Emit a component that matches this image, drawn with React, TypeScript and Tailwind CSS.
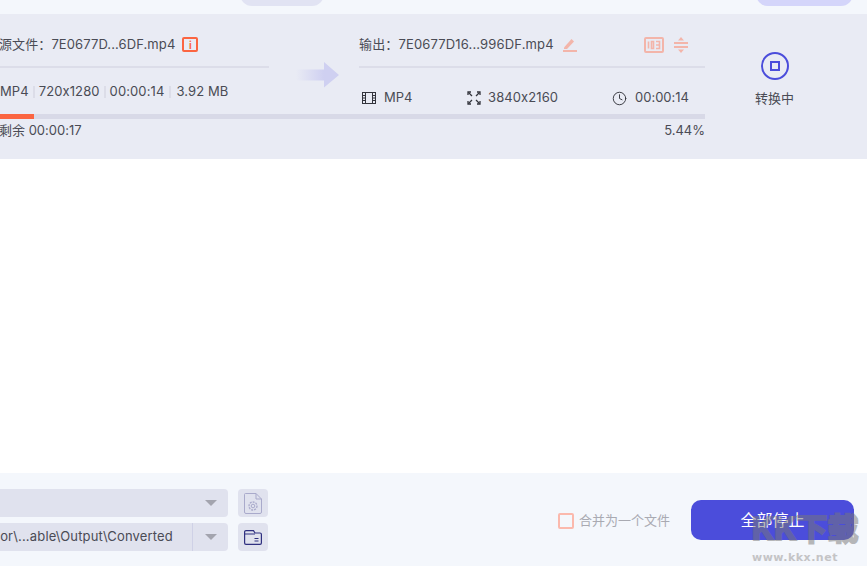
import React from "react";
import { Clock } from "lucide-react";

const font = "font-['Inter','Noto_Sans_CJK_SC',sans-serif] [font-feature-settings:'calt'_0]";

const Sep = () => <span className="mx-[4px] h-[12px] w-[2px] bg-[#dcdde8]" />;

const Caret = () => (
	<span className="h-0 w-0 border-x-[6px] border-t-[6px] border-x-transparent border-t-[#a3a4ae]" />
);

const FilmIcon = () => (
	<svg width="14" height="12" viewBox="0 0 14 12" fill="none" stroke="#33343c" strokeWidth="1">
		<rect x=".5" y=".5" width="13" height="11" />
		<path d="M3.500 .5V11.500M10.500 .5V11.500M.5 3.500H3.500M.5 6H3.500M.5 8.500H3.500M10.500 3.500H13.500M10.500 6H13.500M10.500 8.500H13.500" />
	</svg>
);

const FullscreenIcon = () => (
	<svg width="14" height="14" viewBox="0 0 14 14" fill="none" stroke="#33343c" strokeWidth="1.300">
		<path d="M1 4V1h3M10 1H13v3M13 10V13H10M4 13H1V10" />
		<path d="M1.500 1.500L5 5M12.500 1.500L9 5M12.500 12.500L9 9M1.500 12.500L5 9" />
	</svg>
);

const App: React.FC = () => {
	return (
		<div className={`flex h-[566px] w-[867px] flex-col overflow-hidden bg-white ${font} text-[13px] text-[#4a4b55]`}>
			<div className="flex h-[14px] overflow-hidden bg-[#f4f7fc]">
				<div className="mt-[-18px] ml-[240px] h-[24px] w-[84px] rounded-[12px] bg-[#e1e3f3]" />
				<div className="mt-[-18px] ml-[432px] h-[24px] w-[97px] rounded-[12px] bg-[#d4d5fa]" />
			</div>

			<div className="flex h-[145px] bg-[#e9ebf4]">
				<div className="flex w-[705px] flex-col">
					<div className="flex h-[100px]">
						<div className="ml-[-1px] w-[270px]">
							<div className="flex h-[52px] items-center pt-[9px]">
								<span className="tracking-[.1px] whitespace-nowrap">源文件：7E0677D...6DF.mp4</span>
								<span className="ml-[7px] flex h-[15px] w-[16px] items-center justify-center rounded-[2px] border-2 border-[#fb6541]">
									<span className="text-[10px] leading-none font-bold text-[#fb6541]">i</span>
								</span>
							</div>
							<div className="h-[2px] bg-[#dcdde9]" />
							<div className="flex h-[46px] items-center pt-[2px] pl-[1px] tracking-[.1px] whitespace-nowrap">
								<span>MP4</span>
								<Sep />
								<span>720x1280</span>
								<Sep />
								<span className="mr-[1px]">00:00:14</span>
								<Sep />
								<span className="ml-[1px]">3.92 MB</span>
							</div>
						</div>

						<div className="ml-[27px] flex w-[43px] items-start pt-[48px]">
							<svg width="43" height="26" viewBox="0 0 43 26">
								<defs>
									<linearGradient id="arrowFade" x1="0" x2="1" y1="0" y2="0">
										<stop offset="0" stopColor="#cfd0f1" stopOpacity="0" />
										<stop offset="0.65" stopColor="#cfd0f1" />
									</linearGradient>
								</defs>
								<path d="M0 7.500H28V0L43 13L28 25.500V18.500H0Z" fill="url(#arrowFade)" />
							</svg>
						</div>

						<div className="ml-[20px] w-[346px]">
							<div className="flex h-[52px] items-center pt-[9px]">
								<span className="tracking-[.15px] whitespace-nowrap">输出：7E0677D16...996DF.mp4</span>
								<svg className="ml-[9px]" width="14" height="14" viewBox="0 0 14 14" fill="#f3b5aa">
									<path d="M1 9.500L8.500 1L11 3.500L4 11H1Z" />
									<rect x="0" y="12" width="14" height="2" />
								</svg>
								<svg className="ml-auto" width="20" height="16" viewBox="0 0 20 16" fill="none" stroke="#f3b5aa">
									<rect x="1" y="1" width="18" height="14" rx="1" strokeWidth="2" />
									<path d="M4.500 4.500V11.500M7.500 4.500H9.500V11.500H7.500ZM12 4.500H15.500V11.500H12M12 8H15" strokeWidth="1.600" />
								</svg>
								<svg className="mr-[17px] ml-[10px]" width="14" height="16" viewBox="0 0 14 16" fill="#f3b5aa">
									<rect x="0" y="5" width="14" height="2" />
									<rect x="0" y="9" width="14" height="2" />
									<path d="M7 0L10 3.500H4ZM7 16L10 12.500H4Z" />
								</svg>
							</div>
							<div className="h-[2px] bg-[#dcdde9]" />
							<div className="flex h-[46px] items-center pt-[14px] whitespace-nowrap">
								<div className="flex w-[108px] items-center pl-[3px]">
									<FilmIcon />
									<span className="ml-[8px]">MP4</span>
								</div>
								<div className="flex w-[145px] items-center">
									<FullscreenIcon />
									<span className="ml-[7px] tracking-[.1px]">3840x2160</span>
								</div>
								<div className="flex items-center">
									<Clock size={15} strokeWidth={1.5} color="#33343c" />
									<span className="ml-[8px]">00:00:14</span>
								</div>
							</div>
						</div>
					</div>

					<div className="h-[5px] bg-[#d8d9e7]">
						<div className="h-full w-[34px] bg-[#fb6541]" />
					</div>
					<div className="flex justify-between pt-[2px] leading-[18px]">
						<span className="ml-[-1px] whitespace-nowrap">剩余 00:00:17</span>
						<span>5.44%</span>
					</div>
				</div>

				<div className="flex flex-1 flex-col items-center pt-[38px] pr-[23px]">
					<span className="flex h-[28px] w-[28px] items-center justify-center rounded-full border-2 border-[#4b4ddb]">
						<span className="h-[10px] w-[10px] border-2 border-[#4b4ddb]" />
					</span>
					<span className="mt-[9px] leading-[18px]">转换中</span>
				</div>
			</div>

			<div className="flex-1" />

			<div className="relative flex h-[93px] items-start bg-[#f4f7fc] pt-[16px]">
				<div className="flex w-[228px] flex-col gap-[6px]">
					<div className="flex h-[28px] items-center justify-end rounded-r-[4px] bg-[#e0e2ee] pr-[11px]">
						<Caret />
					</div>
					<div className="flex h-[28px] items-center rounded-r-[4px] bg-[#e0e2ee]">
						<span className="flex h-full w-[193px] items-center justify-end border-r border-[#cfd1e6] pr-[19px] tracking-[.17px] whitespace-nowrap">
							or\...able\Output\Converted
						</span>
						<span className="flex flex-1 justify-center">
							<Caret />
						</span>
					</div>
				</div>

				<div className="ml-[10px] flex flex-col gap-[6px]">
					<div className="flex h-[28px] w-[30px] items-center justify-center rounded-[4px] bg-[#e0e2ee]">
						<svg width="18" height="21" viewBox="0 0 18 21" fill="none" stroke="#a9aacb">
							<path d="M1.500 .5H12L17.500 6V19A1.500 1.500 0 0 1 16 20.500H2A1.500 1.500 0 0 1 .5 19V1.500A1 1 0 0 1 1.500 .5Z" />
							<path d="M12 .5V6H17.500" />
							<circle cx="9" cy="13" r="1.800" />
							<circle cx="9" cy="13" r="4" strokeDasharray="2 1" strokeWidth="1.300" />
						</svg>
					</div>
					<div className="flex h-[28px] w-[30px] items-center justify-center rounded-[4px] bg-[#e0e2ee]">
						<svg width="18" height="15" viewBox="0 0 18 15" fill="none" stroke="#2f3080" strokeWidth="1.200">
							<path d="M.6 13V2A1.400 1.400 0 0 1 2 .6H9.500L11 3H16A1.400 1.400 0 0 1 17.400 4.400V13A1.400 1.400 0 0 1 16 14.400H2A1.400 1.400 0 0 1 .6 13Z" />
							<path d="M.6 4H11M10.500 8.500H14.500M10.500 11H14.500" />
						</svg>
					</div>
				</div>

				<div className="ml-[290px] flex items-center pt-[22px]">
					<span className="h-[16px] w-[16px] rounded-[2px] border-2 border-[#fbb9ad]" />
					<span className="ml-[5px] text-[#a9aab2]">合并为一个文件</span>
				</div>

				<button className="mt-[11px] ml-[21px] flex h-[40px] w-[163px] items-center justify-center self-start rounded-[10px] bg-[#4b4ddb] text-[16px] text-white">
					全部停止
				</button>

				<div className="absolute top-[36px] left-[752px] flex w-[115px] flex-col items-start whitespace-nowrap">
					<span className="text-[31px] leading-[40px] font-bold text-[#777777] opacity-50 [-webkit-text-stroke:2px_#777777]">KK下载</span>
					<span className="mt-[2px] font-['DejaVu_Sans',sans-serif] text-[11px] leading-[13px] font-bold tracking-[.5px] text-[#c4c4c6]">
						www.kkx.net
					</span>
				</div>
			</div>
		</div>
	);
};

export default App;
